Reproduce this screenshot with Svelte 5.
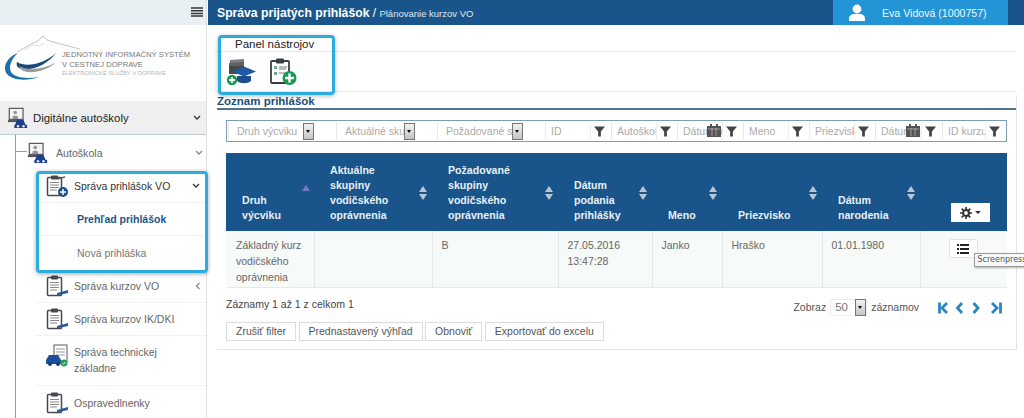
<script>
  const filters = [
    { label: 'Druh výcviku', type: 'select' },
    { label: 'Aktuálné skupiny', type: 'select' },
    { label: 'Požadované skupiny', type: 'select' },
    { label: 'ID', type: 'filter' },
    { label: 'Autoškola', type: 'filter' },
    { label: 'Dátum podania', type: 'date' },
    { label: 'Meno', type: 'filter' },
    { label: 'Priezvisko', type: 'filter' },
    { label: 'Dátum narodenia', type: 'date' },
    { label: 'ID kurzu', type: 'filter' }
  ];

  const columns = [
    { title: ['Druh', 'výcviku'], sorted: true },
    { title: ['Aktuálne', 'skupiny', 'vodičského', 'oprávnenia'] },
    { title: ['Požadované', 'skupiny', 'vodičského', 'oprávnenia'] },
    { title: ['Dátum', 'podania', 'prihlášky'] },
    { title: ['Meno'] },
    { title: ['Priezvisko'] },
    { title: ['Dátum', 'narodenia'] }
  ];
</script>

{#snippet clipboard(badge)}
  <svg class="nav-icon" viewBox="0 0 24 24" width="24" height="24">
    <rect x="2.500" y="3.500" width="14" height="18" rx="1" fill="#fff" stroke="#45484c" stroke-width="1.500" />
    <rect x="6" y="1.500" width="7" height="4" rx="1" fill="#45484c" />
    <path d="M5 8.500h9M5 11h9M5 13.500h9M5 16h7" stroke="#8a8a8a" stroke-width="1.100" />
    {#if badge === 'plus'}
      <path d="M12 5l8-2" stroke="#55585c" stroke-width="1.500" />
      <circle cx="18" cy="18" r="5" fill="#1d4f8c" />
      <path d="M18 15v6M15 18h6" stroke="#fff" stroke-width="1.500" />
    {:else}
      <path d="M12 19l11-3v3l-11 2.500z" fill="#2c5aa0" />
    {/if}
  </svg>
{/snippet}

{#snippet schoolIcon(cls)}
  <svg class={cls} viewBox="0 0 24 24" width="22" height="22">
    <rect x="2.500" y="1.500" width="15" height="12" fill="#f4f4f4" stroke="#55585c" stroke-width="1.300" />
    <path d="M9 4a2 2 0 1 1 0 4 2 2 0 0 1 0-4zM6 11c0-2 6-2 6 0v2H6z" fill="#8f9397" />
    <path d="M1 14h12v2.500H1z" fill="#55585c" />
    <path d="M9 19l2-5h7l2 5 2 1v3H8v-3z" fill="#1d3f8f" />
    <circle cx="12" cy="21" r="1.400" fill="#dfe6f3" />
    <circle cx="18" cy="21" r="1.400" fill="#dfe6f3" />
  </svg>
{/snippet}

<div class="page">
  <aside class="sidebar">
    <div class="side-top">
      <svg viewBox="0 0 12 11" width="12" height="11"><path d="M0 1h12M0 3.700h12M0 6.400h12M0 9.100h12" stroke="#333" stroke-width="1.500" /></svg>
    </div>

    <div class="logo">
      <svg viewBox="0 0 80 75" width="80" height="75">
        <path d="M17 26l14-8 7-3 5-5 4 4 6 2 27 7" fill="none" stroke="#b5b5b5" stroke-width="0.800" />
        <path d="M24 24l9-5 6 1 5-2" fill="none" stroke="#d0d0d0" stroke-width="0.700" />
        <path d="M18 27C7 31 2 41 7 48c6 7 20 7 32 3-12 2-24 1-28-5-3-6 1-14 7-19z" fill="#1e6fa8" />
        <path d="M56 27C44 38 26 42 17 36c-1 3 0 6 5 7 12 2 27-6 34-16z" fill="#17477f" />
        <path d="M55 37c-11 6-27 8-36 3 1 3 3 5 8 6 10 1 22-3 28-9z" fill="#9b9b9b" />
      </svg>
      <div class="logo-text">
        <span>JEDNOTNÝ INFORMAČNÝ SYSTÉM</span>
        <span>V CESTNEJ DOPRAVE</span>
        <small>ELEKTRONICKÉ SLUŽBY V DOPRAVE</small>
      </div>
    </div>

    <div class="root-item">
      {@render schoolIcon('root-icon')}
      <span>Digitálne autoškoly</span>
      <svg class="chev" viewBox="0 0 8 6" width="8" height="6"><path d="M1 1l3 3 3-3" fill="none" stroke="#333" stroke-width="1.300" /></svg>
    </div>

    <nav class="tree">
      <div class="school">
        {@render schoolIcon('school-icon')}
        <span>Autoškola</span>
        <svg class="chev" viewBox="0 0 8 6" width="8" height="6"><path d="M1 1l3 3 3-3" fill="none" stroke="#888" stroke-width="1.300" /></svg>
      </div>

      <div class="highlight-group">
        <div class="item current">
          {@render clipboard('plus')}
          <span>Správa prihlášok VO</span>
          <svg class="chev" viewBox="0 0 8 6" width="8" height="6"><path d="M1 1l3 3 3-3" fill="none" stroke="#333" stroke-width="1.300" /></svg>
        </div>
        <div class="sub active">Prehľad prihlášok</div>
        <div class="sub">Nová prihláška</div>
      </div>

      <div class="item">
        {@render clipboard('pen')}
        <span>Správa kurzov VO</span>
        <svg class="chev" viewBox="0 0 6 8" width="6" height="8"><path d="M4.500 1L1.500 4l3 3" fill="none" stroke="#888" stroke-width="1.200" /></svg>
      </div>
      <div class="item">
        {@render clipboard('pen')}
        <span>Správa kurzov IK/DKI</span>
      </div>
      <div class="item tall">
        <svg class="nav-icon" viewBox="0 0 24 24" width="24" height="24">
          <rect x="9" y="1" width="13" height="17" fill="#fff" stroke="#66696d" stroke-width="1.100" />
          <path d="M11 5h9M11 8h9M11 11h9" stroke="#999" stroke-width="1.200" />
          <path d="M1 20v-4l3-5h9l3 5v4z" fill="#1d4f9c" />
          <circle cx="5" cy="20" r="2" fill="#163c78" />
          <circle cx="13" cy="20" r="2" fill="#163c78" />
          <circle cx="19" cy="19" r="3.400" fill="#1c9a57" />
          <path d="M17.400 19l1.200 1.200 2-2.200" fill="none" stroke="#fff" stroke-width="1" />
        </svg>
        <span>Správa technickej<br />základne</span>
      </div>
      <div class="item last">
        {@render clipboard('pen')}
        <span>Ospravedlnenky</span>
      </div>
    </nav>
  </aside>

  <main class="main">
    <header class="topbar">
      <div class="crumbs"><b>Správa prijatých prihlášok</b> / <small>Plánovanie kurzov VO</small></div>
      <div class="user">
        <svg viewBox="0 0 18 18" width="18" height="18">
          <circle cx="9" cy="5" r="4.400" fill="#fff" />
          <path d="M1 17v-2.500c0-3 3-4.500 4.500-4.500h7c1.500 0 4.500 1.500 4.500 4.500V17z" fill="#fff" />
        </svg>
        <span>Eva Vidová (1000757)</span>
      </div>
    </header>

    <section class="tools">
      <div class="tools-title">Panel nástrojov</div>
      <div class="tools-icons">
        <svg viewBox="0 0 30 28" width="30" height="28">
          <path d="M4 2l14-1v4H4z" fill="#7b7f83" />
          <path d="M3 5l15-1v4H3z" fill="#5e6266" />
          <path d="M3 8h15v8H3z" fill="#44484c" />
          <path d="M11 18v5c4 3 10 3 14 0v-5z" fill="#1d4c8f" />
          <path d="M6 13.500l12-5 12 5-12 5z" fill="#1f5aa6" />
          <circle cx="6" cy="22" r="5.200" fill="#189a54" />
          <path d="M6 19v6M3 22h6" stroke="#fff" stroke-width="1.800" />
        </svg>
        <svg viewBox="0 0 28 28" width="28" height="28">
          <rect x="1" y="3" width="18" height="22" rx="1" fill="#fff" stroke="#3a3d42" stroke-width="1.800" />
          <rect x="6" y="0.500" width="8" height="5" rx="1" fill="#3a3d42" />
          <path d="M4 8h3v3H4zM4 14h3v3H4z" fill="#6aa98a" />
          <path d="M9 9h8M9 11h7M9 15h7" stroke="#777" stroke-width="1.200" />
          <circle cx="19.500" cy="20" r="7" fill="#189a54" />
          <path d="M19.500 15.500v9M15 20h9" stroke="#fff" stroke-width="2.400" />
        </svg>
      </div>
      <div class="tools-mark"></div>
    </section>

    <section class="card">
      <h2>Zoznam prihlášok</h2>

      <div class="filters">
        {#each filters as f}
          <div class="filter {f.type}">
            <span class="ph">{f.label}</span>
            {#if f.type === 'select'}
              <span class="drop"></span>
            {:else}
              {#if f.type === 'date'}
                <svg class="cal" viewBox="0 0 14 13" width="14" height="13">
                  <path d="M0 2h14v11H0z" fill="#555" />
                  <path d="M3 0h2v3H3zM9 0h2v3H9z" fill="#555" />
                  <path d="M1 5h12M5 4v8M9 4v8" stroke="#bbb" stroke-width="0.700" />
                </svg>
              {/if}
              <span class="funnel">
                <svg viewBox="0 0 12 12" width="11" height="11"><path d="M0 0.500h12L7.500 6v5.500h-3V6z" fill="#444" /></svg>
              </span>
            {/if}
          </div>
        {/each}
      </div>

      <table>
        <colgroup>
          <col class="c1" /><col class="c2" /><col class="c3" /><col class="c4" />
          <col class="c5" /><col class="c6" /><col class="c7" /><col class="c8" />
        </colgroup>
        <thead>
          <tr>
            {#each columns as col}
              <th>
                {#each col.title as line}<div>{line}</div>{/each}
                {#if col.sorted}
                  <i class="sort-up"></i>
                {:else}
                  <i class="sort"></i>
                {/if}
              </th>
            {/each}
            <th class="gear-cell">
              <span class="gear-btn">
                <svg viewBox="0 0 14 14" width="12" height="12">
                  <circle cx="7" cy="7" r="3.400" fill="none" stroke="#333" stroke-width="2.400" />
                  <path d="M7 0v3M7 11v3M0 7h3M11 7h3M2 2l2 2M10 10l2 2M12 2l-2 2M4 10l-2 2" stroke="#333" stroke-width="2" />
                </svg>
                <i class="caret"></i>
              </span>
            </th>
          </tr>
        </thead>
        <tbody>
          <tr>
            <td>Základný kurz vodičského oprávnenia</td>
            <td></td>
            <td>B</td>
            <td>27.05.2016<br />13:47:28</td>
            <td>Janko</td>
            <td>Hraško</td>
            <td>01.01.1980</td>
            <td class="action">
              <span class="list-btn">
                <svg viewBox="0 0 12 10" width="12" height="10"><path d="M0 1h2M3 1h9M0 5h2M3 5h9M0 9h2M3 9h9" stroke="#222" stroke-width="2" /></svg>
              </span>
              <span class="tip">Screenpresso</span>
            </td>
          </tr>
        </tbody>
      </table>

      <div class="under">
        <div class="info">
          <div class="count">Záznamy 1 až 1 z celkom 1</div>
          <div class="actions">
            <button>Zrušiť filter</button>
            <button>Prednastavený výhľad</button>
            <button>Obnoviť</button>
            <button>Exportovať do excelu</button>
          </div>
        </div>
        <div class="pager">
          <span>Zobraz</span>
          <span class="size">50<span class="drop"></span></span>
          <span>záznamov</span>
          <svg class="arrows" viewBox="0 0 66 12" width="66" height="12">
            <g fill="none" stroke="#2a86bd" stroke-width="2.800">
              <path d="M1.500 0.500v11" />
              <path d="M9 1L4 6l5 5" />
              <path d="M24 1l-4.500 5 4.500 5" />
              <path d="M35.500 1l4.500 5-4.500 5" />
              <path d="M54 1l5 5-5 5" />
              <path d="M62.500 0.500v11" />
            </g>
          </svg>
        </div>
      </div>
    </section>
  </main>
</div>

<style>
  :global(body) {
    margin: 0;
    background: #fff;
    font-family: "Liberation Sans", Arial, sans-serif;
  }

  .page {
    display: flex;
    width: 1024px;
    height: 418px;
    overflow: hidden;
    color: #555;
    font-size: 10.500px;
  }

  /* sidebar */
  .sidebar {
    width: 207px;
    flex: none;
    box-sizing: border-box;
    border-right: 1px solid #dfdfdf;
    margin-right: 1px;
  }

  .side-top {
    height: 25px;
    background: #e9f0f4;
    display: flex;
    align-items: center;
    justify-content: flex-end;
    padding-right: 3px;
  }

  .logo {
    height: 76px;
    display: flex;
    align-items: center;
  }

  .logo-text {
    display: flex;
    flex-direction: column;
    margin: 2px 0 0 -18px;
    font-size: 7.650px;
    line-height: 9.500px;
    color: #777;
    white-space: nowrap;
  }

  .logo-text small {
    font-size: 5.800px;
    line-height: 9px;
    color: #b5b5b5;
  }

  .root-item {
    height: 34px;
    box-sizing: border-box;
    border-bottom: 1px solid #b9cbd7;
    background: #efefef;
    display: flex;
    align-items: center;
    padding: 0 5px 0 7px;
    color: #222;
    font-size: 11.400px;
  }

  .root-item span {
    flex: 1;
    margin-left: 4px;
  }

  .tree {
    position: relative;
    padding-left: 36px;
  }

  .tree::before {
    content: "";
    position: absolute;
    left: 15px;
    top: 0;
    bottom: 0;
    width: 1px;
    background: #999;
  }

  .tree::after {
    content: "";
    position: absolute;
    left: 15px;
    top: 16px;
    width: 12px;
    height: 1px;
    background: #999;
  }

  .school {
    height: 36px;
    margin-left: -9px;
    display: flex;
    align-items: center;
    padding-right: 3px;
    color: #666;
    font-size: 10.600px;
  }

  .school span {
    flex: 1;
    margin-left: 7px;
  }

  .highlight-group {
    position: relative;
    z-index: 1;
    width: 172px;
    height: 102px;
    box-sizing: border-box;
    border: 3px solid #2cade0;
    border-radius: 4px;
    box-shadow: 0 1px 4px rgba(0, 0, 0, 0.35);
    margin-bottom: -3px;
    background: #fff;
  }

  .highlight-group .item {
    height: 29px;
    padding: 0 5px 4px 6px;
  }

  .item {
    height: 33px;
    box-sizing: border-box;
    display: flex;
    align-items: center;
    padding: 0 5px 0 9px;
    border-bottom: 1px solid #f2f2f2;
    color: #666;
  }

  .item span {
    flex: 1;
    margin-left: 5px;
  }

  .item.current {
    color: #333;
  }

  .item.tall {
    height: 50px;
    align-items: flex-start;
    padding-top: 8px;
    line-height: 16px;
  }

  .item.last {
    border-bottom: none;
  }

  .sub {
    height: 33px;
    box-sizing: border-box;
    display: flex;
    align-items: center;
    padding-left: 38px;
    border-bottom: 1px solid #f2f2f2;
    color: #777;
  }

  .sub:last-child {
    border-bottom: none;
  }

  .sub.active {
    color: #1b5687;
    font-weight: bold;
  }

  /* main */
  .main {
    flex: 1;
    min-width: 0;
  }

  .topbar {
    height: 25px;
    background: #19558a;
    color: #fff;
    display: flex;
    align-items: center;
    justify-content: space-between;
    padding-left: 9px;
  }

  .crumbs {
    font-size: 12px;
  }

  .crumbs b {
    font-size: 12.200px;
  }

  .crumbs small {
    font-size: 9.500px;
    color: #dfe9f2;
  }

  .user {
    width: 175px;
    margin-right: 16px;
    height: 25px;
    background: #2394d6;
    display: flex;
    align-items: center;
    padding-left: 15px;
    box-sizing: border-box;
    gap: 16px;
    font-size: 10.600px;
    color: #eef7fc;
  }

  .tools {
    position: relative;
    margin: 0 8px 0 9px;
    padding-top: 13px;
  }

  .tools-title {
    height: 13px;
    padding-left: 18px;
    font-size: 11.500px;
    line-height: 13px;
    color: #222;
    border-bottom: 1px solid #e6e6e6;
  }

  .tools-icons {
    height: 39px;
    display: flex;
    align-items: center;
    gap: 14px;
    padding-left: 9px;
    border-bottom: 1px solid #e6e6e6;
  }

  .tools-mark {
    position: absolute;
    left: 1px;
    top: 10px;
    width: 117px;
    height: 60px;
    box-sizing: border-box;
    border: 3px solid #2cade0;
    border-radius: 4px;
    box-shadow: 0 1px 4px rgba(0, 0, 0, 0.3);
  }

  .card {
    margin: 3px 7px 0 9px;
    padding: 0 9px 8px 9px;
    border-right: 1px solid #e4e4e4;
    border-bottom: 1px solid #e4e4e4;
  }

  h2 {
    margin: 0 -9px 10px;
    font-size: 11.500px;
    line-height: 13px;
    color: #1f4e79;
    border-bottom: 2px solid #53738d;
  }

  .filters {
    width: 781px;
    height: 22px;
    box-sizing: border-box;
    display: grid;
    grid-template-columns: 108px 101px 108px 66px 66px 66px 66px 66px 67px 64px;
    align-items: center;
    padding-left: 1px;
    border: 1px solid #7d9db5;
    background: #fff;
    overflow: hidden;
  }

  .filter {
    display: flex;
    align-items: center;
    height: 18px;
    position: relative;
    border-left: 1px solid #e8e8e8;
    overflow: hidden;
    padding-left: 5px;
    box-sizing: border-box;
    margin-right: 4px;
  }

  .filter.select {
    margin-right: 22px;
    padding-left: 8px;
  }

  .ph {
    flex: 1;
    min-width: 0;
    color: #aaa;
    white-space: nowrap;
    overflow: hidden;
    font-size: 10.500px;
  }

  .drop {
    flex: none;
    width: 9px;
    height: 15px;
    border: 1px solid #777;
    background: linear-gradient(#f2f2f2, #c4c4c4);
    position: relative;
  }

  .drop::after {
    content: "";
    position: absolute;
    left: 2px;
    top: 6px;
    border: 2.500px solid transparent;
    border-top: 3px solid #111;
    border-bottom: 0;
  }

  .cal {
    position: absolute;
    right: 18px;
    top: 2px;
  }

  .funnel {
    flex: none;
    width: 16px;
    height: 18px;
    display: flex;
    align-items: center;
    justify-content: center;
    border-left: 1px solid #eee;
  }

  table {
    width: 781px;
    table-layout: fixed;
    border-collapse: collapse;
    margin-top: 11px;
  }

  col.c1 { width: 88px; }
  col.c2 { width: 118px; }
  col.c3 { width: 126px; }
  col.c4 { width: 94px; }
  col.c5 { width: 70px; }
  col.c6 { width: 100px; }
  col.c7 { width: 98px; }

  th {
    position: relative;
    height: 78px;
    box-sizing: border-box;
    background: #19558a;
    padding: 0 0 8px 16px;
    text-align: left;
    vertical-align: bottom;
    color: #e8f0f6;
    font-size: 10.600px;
    line-height: 15px;
  }

  .sort {
    position: absolute;
    right: 5px;
    top: 33px;
    height: 0;
    border-left: 4px solid transparent;
    border-right: 4px solid transparent;
    border-bottom: 6px solid #b8c8d6;
  }

  .sort::after {
    content: "";
    position: absolute;
    left: -4px;
    top: 8px;
    border-left: 4px solid transparent;
    border-right: 4px solid transparent;
    border-top: 6px solid #b8c8d6;
  }

  .sort-up {
    position: absolute;
    right: 4px;
    top: 32px;
    border-left: 4px solid transparent;
    border-right: 4px solid transparent;
    border-bottom: 6px solid #7a78c8;
  }

  .gear-cell {
    padding: 0 0 9px 31px;
  }

  .gear-btn {
    display: flex;
    align-items: center;
    justify-content: center;
    gap: 3px;
    width: 39px;
    height: 19px;
    background: #fff;
  }

  .caret {
    border-left: 3.500px solid transparent;
    border-right: 3.500px solid transparent;
    border-top: 3.500px solid #333;
  }

  td {
    height: 56px;
    box-sizing: border-box;
    background: #f6faf8;
    border-left: 1px solid #e3e7e5;
    border-bottom: 1px solid #e6eae8;
    padding: 6px 9px 0;
    vertical-align: top;
    line-height: 16px;
    color: #666;
    font-size: 10.500px;
  }

  td:first-child {
    border-left: none;
    padding-left: 10px;
  }

  .action {
    position: relative;
  }

  .list-btn {
    position: absolute;
    left: 28px;
    top: 8px;
    width: 27px;
    height: 17px;
    display: flex;
    align-items: center;
    justify-content: center;
    background: #fff;
    border: 1px solid #e2e2e2;
    border-radius: 2px;
  }

  .tip {
    position: absolute;
    left: 53px;
    top: 22px;
    height: 12px;
    padding: 0 3px;
    border: 1px solid #999;
    background: #f8f8f8;
    box-shadow: 1px 1px 2px rgba(0, 0, 0, 0.3);
    font: 8px/12px "DejaVu Sans", sans-serif;
    color: #555;
    white-space: nowrap;
  }

  .under {
    display: flex;
    justify-content: space-between;
    width: 781px;
    margin-top: 9px;
  }

  .count {
    color: #444;
    font-size: 10.500px;
    line-height: 14px;
  }

  .actions {
    display: flex;
    gap: 2.500px;
    margin-top: 11px;
  }

  button {
    height: 19px;
    padding: 0 9px;
    background: #fff;
    border: 1px solid #dcdcdc;
    font: 10.500px "Liberation Sans", Arial, sans-serif;
    color: #555;
  }

  .pager {
    display: flex;
    align-items: flex-start;
    gap: 4px;
    padding: 2px 3px 0 0;
    color: #555;
    font-size: 10.500px;
    line-height: 17px;
  }

  .size {
    display: flex;
    align-items: center;
    justify-content: space-between;
    width: 37px;
    height: 17px;
    box-sizing: border-box;
    padding-left: 4px;
    border: 1px solid #eee;
    color: #777;
    font-size: 11.500px;
  }

  .arrows {
    margin: 3px 0 0 15px;
  }

  .nav-icon,
  :global(.root-icon),
  :global(.school-icon),
  .chev {
    flex: none;
  }
</style>
